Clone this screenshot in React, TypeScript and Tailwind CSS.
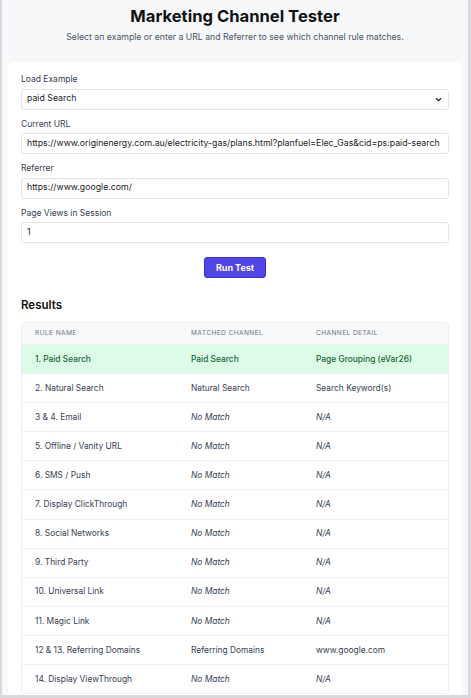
import React from "react";

const rows: { name: string; channel: string; detail: string; match?: boolean; hit?: boolean }[] = [
  { name: "1. Paid Search", channel: "Paid Search", detail: "Page Grouping (eVar26)", hit: true },
  { name: "2. Natural Search", channel: "Natural Search", detail: "Search Keyword(s)", match: true },
  { name: "3 & 4. Email", channel: "No Match", detail: "N/A" },
  { name: "5. Offline / Vanity URL", channel: "No Match", detail: "N/A" },
  { name: "6. SMS / Push", channel: "No Match", detail: "N/A" },
  { name: "7. Display ClickThrough", channel: "No Match", detail: "N/A" },
  { name: "8. Social Networks", channel: "No Match", detail: "N/A" },
  { name: "9. Third Party", channel: "No Match", detail: "N/A" },
  { name: "10. Universal Link", channel: "No Match", detail: "N/A" },
  { name: "11. Magic Link", channel: "No Match", detail: "N/A" },
  { name: "12 & 13. Referring Domains", channel: "Referring Domains", detail: "www.google.com", match: true },
  { name: "14. Display ViewThrough", channel: "No Match", detail: "N/A" },
];

function Field({ label, value, select }: { label: string; value: string; select?: boolean }) {
  return (
    <div className="flex flex-col">
      <div className="text-[8.5px] text-[#374151] leading-none mb-[5px]">{label}</div>
      <div className="h-[21px] rounded-[3px] border border-[#e2e4e8] bg-white flex items-center justify-between pl-[5px] pr-[6px] text-[8.75px] text-[#222] whitespace-nowrap overflow-hidden">
        <span>{value}</span>
        {select && (
          <svg width="7" height="5" viewBox="0 0 7 5" fill="none">
            <path d="M1 1.2 3.5 3.7 6 1.2" stroke="#222" strokeWidth="1.3" />
          </svg>
        )}
      </div>
    </div>
  );
}

export default function App() {
  return (
    <div
      className="w-[471px] h-[698px] overflow-hidden bg-[#f7f8fa] border-l-2 border-r-[3px] border-b-[3px] border-[#d8d9dc]"
      style={{ fontFamily: "Inter, 'Noto Sans', sans-serif" }}
    >
      <div className="flex flex-col items-center pt-[5px]">
        <h1 className="text-[16.6px] font-bold text-[#111] leading-[22px]">Marketing Channel Tester</h1>
        <p className="text-[8.7px] text-[#4b5563] mt-[4px] leading-[12px]">
          Select an example or enter a URL and Referrer to see which channel rule matches.
        </p>
      </div>
      <div className="mt-[19px] mx-[6px] bg-white rounded-t-[6px] px-[13px] pt-[13px] pb-[20px]">
        <div className="flex flex-col gap-[10px]">
          <Field label="Load Example" value="paid Search" select />
          <Field label="Current URL" value="https://www.originenergy.com.au/electricity-gas/plans.html?planfuel=Elec_Gas&cid=ps:paid-search" />
          <Field label="Referrer" value="https://www.google.com/" />
          <Field label="Page Views in Session" value="1" />
        </div>
        <div className="flex justify-center mt-[14px]">
          <button className="w-[62px] h-[21px] rounded-[3px] bg-[#4f46e5] border border-[#3b30d6] text-white text-[9px] font-bold">
            Run Test
          </button>
        </div>
        <h2 className="mt-[20px] text-[11.5px] font-semibold text-[#111] leading-[14px]">Results</h2>
        <div className="mt-[10px] rounded-[4px] border border-[#eceef1] overflow-hidden">
          <div className="grid grid-cols-[157px_125px_1fr] h-[21px] items-center bg-[#f8f9fb] text-[6.6px] tracking-[0.06em] text-[#6b7280] uppercase">
            <div className="pl-[13px]">Rule Name</div>
            <div className="pl-[12px]">Matched Channel</div>
            <div className="pl-[12px]">Channel Detail</div>
          </div>
          {rows.map((r) => (
            <div
              key={r.name}
              className={
                "grid grid-cols-[157px_125px_1fr] h-[29.1px] items-center border-t border-[#eef0f2] text-[8.4px] " +
                (r.hit ? "bg-[#dcfce7] text-[#166534] font-medium" : "bg-white text-[#374151]")
              }
            >
              <div className="pl-[13px]">{r.name}</div>
              <div className={"pl-[12px] " + (r.hit || r.match ? "" : "italic")}>{r.channel}</div>
              <div className={"pl-[12px] " + (r.hit || r.match ? "" : "italic")}>{r.detail}</div>
            </div>
          ))}
        </div>
      </div>
    </div>
  );
}
